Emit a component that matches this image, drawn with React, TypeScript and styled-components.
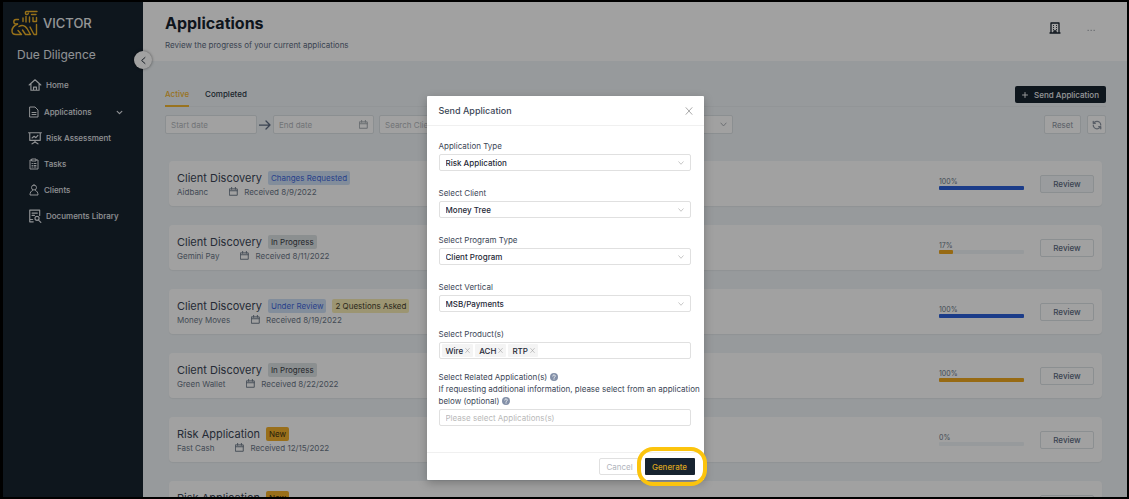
import React from 'react';
import styled, { createGlobalStyle } from 'styled-components';

const GlobalStyle = createGlobalStyle`
  * { box-sizing: border-box; }
  html, body { margin: 0; padding: 0; background: #000; }
  body, button, input, select {
    font-family: Inter, "Liberation Sans", sans-serif;
  }
  button, input, select { margin: 0; }
  h1, h2, h3, p, ul { margin: 0; padding: 0; }
  ul { list-style: none; }
  svg { display: block; flex: none; }
`;

const Shell = styled.div`
  position: relative;
  display: flex;
  height: 100vh;
  overflow: hidden;
  border: 2px solid #000;
  border-left-width: 3px;
`;

const Sidebar = styled.nav`
  width: 140px;
  flex: none;
  background: #17232f;
  color: #e4e7eb;
`;

const Brand = styled.a`
  display: flex;
  align-items: center;
  gap: 4px;
  padding: 6px 0 0 8px;
  color: #eceef0;
  font-size: 13px;
  line-height: 30px;
  font-weight: 500;
  text-decoration: none;
`;

const ProductName = styled.p`
  padding: 7px 14px 0;
  font-size: 12px;
  line-height: 20px;
`;

const NavList = styled.ul`
  padding: 7px 20px 0 25px;
`;

const NavItem = styled.li`
  &:first-child { margin-bottom: 1px; }
`;

const NavLink = styled.a`
  display: flex;
  align-items: center;
  gap: 4px;
  height: 26px;
  color: inherit;
  font-size: 8px;
  font-weight: 500;
  text-decoration: none;
`;

const NavCaret = styled.span`
  margin-left: auto;
`;

const Main = styled.main`
  position: relative;
  flex: 1;
  min-width: 0;
  background: #eff4f7;
`;

const CollapseButton = styled.button`
  position: absolute;
  left: -9px;
  top: 49px;
  width: 18px;
  height: 18px;
  padding: 0;
  display: flex;
  align-items: center;
  justify-content: center;
  border: 0;
  border-radius: 50%;
  background: #fff;
  color: #17232f;
  box-shadow: 0 0 3px rgba(0, 0, 0, 0.5);
`;

const PageHeader = styled.header`
  display: flex;
  justify-content: space-between;
  height: 59px;
  padding: 9px 32px 0 22px;
  background: #fff;
`;

const PageTitle = styled.h1`
  color: #17232f;
  font-size: 16px;
  line-height: 24px;
  font-weight: 700;
`;

const PageSubtitle = styled.p`
  padding-top: 4px;
  color: #5d6b82;
  font-size: 8px;
  line-height: 12px;
`;

const HeaderActions = styled.div`
  display: flex;
  align-items: center;
  gap: 26px;
  height: 34px;
`;

const IconButton = styled.button`
  display: flex;
  padding: 0;
  border: 0;
  background: none;
  color: #17232f;
`;

const Content = styled.div`
  padding: 25px 21px 0 22px;
`;

const TabBar = styled.div`
  display: flex;
  align-items: flex-start;
  gap: 16px;
  height: 21px;
  border-bottom: 1px solid #e8edf0;
`;

const Tab = styled.button<{ $active?: boolean }>`
  height: 21px;
  padding: 0 0 3px;
  border: 0;
  border-bottom: 2px solid ${(p) => (p.$active ? '#f2b632' : 'transparent')};
  background: none;
  color: ${(p) => (p.$active ? '#f2b632' : '#2b3846')};
  font-size: 8px;
  font-weight: 500;
`;

const SendButton = styled.button`
  display: flex;
  align-items: center;
  gap: 6px;
  height: 17px;
  margin-left: auto;
  padding: 0 7px;
  border: 0;
  border-radius: 2px;
  background: #17232f;
  color: #eceef0;
  font-size: 8px;
  font-weight: 500;
`;

const FilterBar = styled.div`
  display: flex;
  align-items: center;
  padding-top: 8px;
  color: #5d6b82;
`;

const FilterBox = styled.label<{ $width: number; $gap?: number }>`
  display: flex;
  align-items: center;
  width: ${(p) => p.$width}px;
  height: 19px;
  margin-right: ${(p) => p.$gap ?? 0}px;
  padding: 0 5px;
  border: 1px solid #dde2e6;
  border-radius: 2px;
  background: #fff;
  color: #a0a6ad;
`;

const FilterInput = styled.input`
  flex: 1;
  min-width: 0;
  padding: 0;
  border: 0;
  background: none;
  font-size: 8px;
  &::placeholder { color: #b4b8bd; opacity: 1; }
`;

const FilterSelect = styled.select`
  flex: 1;
  min-width: 0;
  padding: 0;
  border: 0;
  appearance: none;
  background: none;
  color: #b4b8bd;
  font-size: 8px;
`;

const RangeArrow = styled.span`
  display: flex;
  justify-content: center;
  width: 16px;
`;

const FilterActions = styled.div`
  display: flex;
  gap: 6px;
  margin-left: auto;
`;

const SmallButton = styled.button<{ $width: number }>`
  display: flex;
  align-items: center;
  justify-content: center;
  width: ${(p) => p.$width}px;
  height: 19px;
  padding: 0;
  border: 1px solid #dde2e6;
  border-radius: 2px;
  background: #fff;
  color: #8d96a3;
  font-size: 8px;
`;

const CardList = styled.ul`
  display: flex;
  flex-direction: column;
  gap: 19px;
  padding: 27px 4px 0;
`;

const Card = styled.li`
  display: flex;
  align-items: center;
  height: 45px;
  padding: 0 8px;
  border-radius: 4px;
  background: #fff;
  box-shadow: 0 1px 1px rgba(0, 0, 0, 0.05);
`;

const CardInfo = styled.div`
  flex: 1;
`;

const CardHeading = styled.div`
  display: flex;
  align-items: center;
  gap: 6px;
  height: 16px;
`;

const CardTitle = styled.h3`
  color: #3b4656;
  font-size: 11px;
  font-weight: 400;
`;

const tones = {
  blue: ['#cfe0f6', '#3f68dc'],
  gray: ['#dde2e4', '#3a4148'],
  yellow: ['#f7ecb5', '#46412c'],
  gold: ['#f3b02b', '#3b3010'],
};
type Tone = keyof typeof tones;

const Badge = styled.span<{ $tone: Tone }>`
  height: 14px;
  padding: 0 3px;
  border-radius: 2px;
  background: ${(p) => tones[p.$tone][0]};
  color: ${(p) => tones[p.$tone][1]};
  font-size: 8px;
  line-height: 14px;
`;

const CardMeta = styled.div`
  display: flex;
  align-items: center;
  gap: 6px;
  color: #6b7788;
  font-size: 8px;
  line-height: 12px;
`;

const ClientName = styled.span`
  margin-right: 15px;
`;

const Progress = styled.div`
  width: 85px;
  margin-right: 16px;
  color: #6b7788;
  font-size: 7px;
  line-height: 9px;
`;

const Track = styled.div`
  height: 4px;
  border-radius: 1px;
  background: #eff4f7;
`;

const Fill = styled.div<{ $color: string }>`
  height: 4px;
  border-radius: 1px;
  background: ${(p) => p.$color};
`;

const ReviewButton = styled.button<{ $tinted?: boolean }>`
  width: 54px;
  height: 18px;
  padding: 0;
  border: 1px solid #dde2e6;
  border-radius: 2px;
  background: ${(p) => (p.$tinted ? '#f4f8fa' : '#fff')};
  color: #5d6b82;
  font-size: 8px;
  font-weight: 500;
`;

const Overlay = styled.div`
  position: absolute;
  inset: 0;
  display: flex;
  justify-content: center;
  align-items: flex-start;
  padding-top: 94px;
  background: rgba(0, 0, 0, 0.37);
`;

const Modal = styled.section`
  width: 277px;
  border-radius: 1px;
  background: #fff;
  box-shadow: 0 3px 10px rgba(0, 0, 0, 0.25);
`;

const ModalHeader = styled.header`
  display: flex;
  align-items: center;
  justify-content: space-between;
  height: 30px;
  padding: 0 11px 0 12px;
  border-bottom: 1px solid #f0f0f0;
  color: #9a9a9a;
`;

const ModalTitle = styled.h2`
  color: #3b4656;
  font-size: 9px;
  line-height: 14px;
  font-weight: 500;
`;

const ModalBody = styled.form`
  padding: 14px 13px 26px 12px;
`;

const Field = styled.div<{ $last?: boolean; $tight?: boolean }>`
  display: flex;
  flex-direction: column;
  gap: 2px;
  margin-bottom: ${(p) => (p.$last ? 0 : p.$tight ? 12 : 16)}px;
`;

const FieldLabel = styled.label`
  color: #3b4656;
  font-size: 8px;
  line-height: 12px;
  white-space: nowrap;
`;

const Control = styled.div<{ $tags?: boolean }>`
  display: flex;
  align-items: center;
  gap: 2px;
  height: 17px;
  padding: 0 ${(p) => (p.$tags ? 2 : 6)}px;
  border: 1px solid #e0e0e0;
  border-radius: 2px;
  background: #fff;
  color: #b5b5b5;
`;

const Select = styled.select`
  flex: 1;
  min-width: 0;
  padding: 0;
  border: 0;
  appearance: none;
  background: none;
  color: #1f2937;
  font-size: 8px;
  font-weight: 500;
`;

const TextInput = styled.input`
  flex: 1;
  min-width: 0;
  padding: 0;
  border: 0;
  background: none;
  font-size: 8px;
  &::placeholder { color: #b9b9b9; opacity: 1; }
`;

const Tag = styled.span`
  display: flex;
  align-items: center;
  gap: 2px;
  height: 13px;
  padding: 0 3px 0 4px;
  border-radius: 1px;
  background: #f4f4f4;
  color: #1f2937;
  font-size: 8px;
  font-weight: 500;
`;

const CloseButton = styled(IconButton)`
  color: #999;
`;

const Help = styled.span`
  display: inline-block;
  margin-left: 3px;
  vertical-align: -1px;
`;

const ModalFooter = styled.footer`
  display: flex;
  justify-content: flex-end;
  gap: 4px;
  padding: 5px 9px;
  border-top: 1px solid #f0f0f0;
`;

const CancelButton = styled.button`
  width: 42px;
  height: 17px;
  padding: 0;
  border: 1px solid #e0e0e0;
  border-radius: 2px;
  background: #fff;
  color: #b0b4bc;
  font-size: 8px;
`;

const GenerateButton = styled.button`
  position: relative;
  width: 50px;
  height: 17px;
  padding: 0;
  border: 0;
  border-radius: 1px;
  background: #17232f;
  color: #dba51f;
  font-size: 8px;
  font-weight: 500;
  &::after {
    content: '';
    position: absolute;
    inset: -11px -12px -11px -8px;
    border: 4px solid #fcc40d;
    border-radius: 16px;
  }
`;

type IconProps = { w: number; h?: number; box?: string; sw?: number; children: React.ReactNode };
const Icon = ({ w, h = w, box = '0 0 24 24', sw = 2, children }: IconProps) => (
  <svg width={w} height={h} viewBox={box} fill="none" stroke="currentColor" strokeWidth={sw} strokeLinecap="round" strokeLinejoin="round" aria-hidden="true">
    {children}
  </svg>
);

const LionLogo = () => (
  <svg width="28" height="28" viewBox="0 0 28 28" fill="none" stroke="#f0b429" strokeWidth="1.4" strokeLinecap="round" strokeLinejoin="round" aria-hidden="true">
    <path d="M26 2.500H15.500a1.500 1.500 0 1 0 1.800 1.800M20.500 5.500H25" />
    <path d="M12 9v3.500M15 7.500V13M18.500 8v5M22 8.500v4h3.500V8.500" />
    <path d="M7.500 10.500H5a2.200 2.200 0 0 0 0 4.400h1.500" />
    <path d="M6.500 15c-3.500 1.500-5.500 4-5.500 7 0 2.200 1.200 3.500 4 3.500h5.500l-3.500-4" />
    <path d="M8 17.500c3-2 6-1 8 2l3.500 6h-5l-3-4.500M25.500 15.500v10h-2.500l-4-7.500" />
  </svg>
);

const Chevron = ({ w = 6 }: { w?: number }) => (
  <Icon w={w} sw={3}><path d="M3 7l9 10 9-10" /></Icon>
);
const Close = ({ w }: { w: number }) => (
  <Icon w={w} sw={2.5}><path d="M3 2l18 20M21 2L3 22" /></Icon>
);
const Calendar = ({ w = 9 }: { w?: number }) => (
  <Icon w={w} sw={2.5}><path d="M2 5h20v17H2zM2 10h20M7 1v5M17 1v5" /></Icon>
);
const HelpMark = () => (
  <Help>
    <svg width="8" height="8" viewBox="0 0 16 16" aria-hidden="true">
      <circle cx="8" cy="8" r="8" fill="#8390a8" />
      <path d="M5.500 6.200a2.500 2.500 0 1 1 3.600 2.300c-.8.4-1.100.8-1.100 1.500M8 12v.4" fill="none" stroke="#fff" strokeWidth="1.600" strokeLinecap="round" />
    </svg>
  </Help>
);

const navItems = [
  { label: 'Home', w: 14, icon: <path d="M2 12L12 3l10 9M5 10v11h14V10M9.500 21v-5.500h5V21" /> },
  { label: 'Applications', w: 12, caret: true, icon: <path d="M4 2h10l6 6v14H4zM8 13h8M8 17h8" /> },
  { label: 'Risk Assessment', w: 14, icon: <path d="M1 3h22M3 3v13h18V3M7 12l3.500-3 3 2.500L17 7.500M12 16v3M7 22l5-3 5 3" /> },
  { label: 'Tasks', w: 12, icon: <path d="M8 4H4v18h16V4h-4M8 2h8v4H8zM8 11h1M12 11h4M8 15h1M12 15h4M8 18h1M12 18h4" /> },
  { label: 'Clients', w: 12, icon: <path d="M12 2a5 5 0 1 1 0 10 5 5 0 0 1 0-10zM9 13c-3 1-5 4-5 9h16c0-5-2-8-5-9" /> },
  { label: 'Documents Library', w: 14, icon: <path d="M9 22H3V2h17v9M7 7h9M7 11h4M15.500 12.500a3.500 3.500 0 1 1 0 7 3.500 3.500 0 0 1 0-7zM18 19l4 4M3 18h5" /> },
];

type Application = { title: string; client: string; date: string; badges: [string, Tone][]; pct: number; color: string };
const blue = '#2b5fd9';
const gold = '#efa91f';
const applications: Application[] = [
  { title: 'Client Discovery', client: 'Aidbanc', date: '8/9/2022', badges: [['Changes Requested', 'blue']], pct: 100, color: blue },
  { title: 'Client Discovery', client: 'Gemini Pay', date: '8/11/2022', badges: [['In Progress', 'gray']], pct: 17, color: gold },
  { title: 'Client Discovery', client: 'Money Moves', date: '8/19/2022', badges: [['Under Review', 'blue'], ['2 Questions Asked', 'yellow']], pct: 100, color: blue },
  { title: 'Client Discovery', client: 'Green Wallet', date: '8/22/2022', badges: [['In Progress', 'gray']], pct: 100, color: gold },
  { title: 'Risk Application', client: 'Fast Cash', date: '12/15/2022', badges: [['New', 'gold']], pct: 0, color: gold },
  { title: 'Risk Application', client: 'Fast Cash', date: '12/15/2022', badges: [['New', 'gold']], pct: 0, color: gold },
];

const selects = [
  ['type', 'Application Type', 'Risk Application'],
  ['client', 'Select Client', 'Money Tree'],
  ['program', 'Select Program Type', 'Client Program'],
  ['vertical', 'Select Vertical', 'MSB/Payments'],
];

export default function App() {
  return (
    <Shell>
      <GlobalStyle />
      <Sidebar>
        <Brand href="#"><LionLogo />VICTOR</Brand>
        <ProductName>Due Diligence</ProductName>
        <NavList>
          {navItems.map((n) => (
            <NavItem key={n.label}>
              <NavLink href="#">
                <Icon w={n.w}>{n.icon}</Icon>
                {n.label}
                {n.caret && <NavCaret><Icon w={7} sw={4}><path d="M4 8l8 8 8-8" /></Icon></NavCaret>}
              </NavLink>
            </NavItem>
          ))}
        </NavList>
      </Sidebar>
      <Main>
        <PageHeader>
          <div>
            <PageTitle>Applications</PageTitle>
            <PageSubtitle>Review the progress of your current applications</PageSubtitle>
          </div>
          <HeaderActions>
            <IconButton aria-label="Organization">
              <Icon w={12} box="0 0 12 12" sw={1}>
                <path d="M2 11V1h8v10M1 11h10M5 11V9h2v2" strokeWidth="1.300" />
                <path d="M4.500 3.500h.1M7.500 3.500h.1M4.500 5.500h.1M7.500 5.500h.1M4.500 7.500h.1M7.500 7.500h.1" />
              </Icon>
            </IconButton>
            <IconButton aria-label="More">
              <Icon w={8} sw={3}><path d="M3 19h1M12 19h1M21 19h1" opacity="0.500" /></Icon>
            </IconButton>
          </HeaderActions>
        </PageHeader>
        <CollapseButton aria-label="Collapse menu">
          <Icon w={9} sw={2.5}><path d="M16 4l-9 8 9 8" /></Icon>
        </CollapseButton>
        <Content>
          <TabBar>
            <Tab $active>Active</Tab>
            <Tab>Completed</Tab>
            <SendButton>
              <Icon w={6} sw={4}><path d="M12 2v20M2 12h20" /></Icon>
              Send Application
            </SendButton>
          </TabBar>
          <FilterBar>
            <FilterBox $width={92}><FilterInput placeholder="Start date" aria-label="Start date" /></FilterBox>
            <RangeArrow><Icon w={12} sw={2.5}><path d="M1 12h21M14 4l8 8-8 8" /></Icon></RangeArrow>
            <FilterBox $width={101} $gap={5}><FilterInput placeholder="End date" aria-label="End date" /><Calendar /></FilterBox>
            <FilterBox $width={112} $gap={5}><FilterInput placeholder="Search Client" aria-label="Search Client" /></FilterBox>
            <FilterBox $width={237}>
              <FilterSelect aria-label="Status"><option>Status</option></FilterSelect>
              <Chevron w={7} />
            </FilterBox>
            <FilterActions>
              <SmallButton $width={37}>Reset</SmallButton>
              <SmallButton $width={19} aria-label="Refresh">
                <Icon w={10} sw={3}>
                  <path d="M21 12a9 9 0 0 0-9-9 9.750 9.750 0 0 0-6.740 2.740L3 8M3 3v5h5M3 12a9 9 0 0 0 9 9 9.750 9.750 0 0 0 6.740-2.740L21 16M16 16h5v5" />
                </Icon>
              </SmallButton>
            </FilterActions>
          </FilterBar>
          <CardList>
            {applications.map((a, i) => (
              <Card key={i}>
                <CardInfo>
                  <CardHeading>
                    <CardTitle>{a.title}</CardTitle>
                    {a.badges.map(([text, tone]) => <Badge key={text} $tone={tone}>{text}</Badge>)}
                  </CardHeading>
                  <CardMeta>
                    <ClientName>{a.client}</ClientName>
                    <Calendar />
                    <span>Received {a.date}</span>
                  </CardMeta>
                </CardInfo>
                <Progress>
                  {a.pct}%
                  <Track><Fill $color={a.color} style={{ width: `${a.pct}%` }} /></Track>
                </Progress>
                <ReviewButton $tinted={i === 0}>Review</ReviewButton>
              </Card>
            ))}
          </CardList>
        </Content>
      </Main>
      <Overlay>
        <Modal role="dialog" aria-labelledby="dialog-title">
          <ModalHeader>
            <ModalTitle id="dialog-title">Send Application</ModalTitle>
            <CloseButton aria-label="Close"><Close w={8} /></CloseButton>
          </ModalHeader>
          <ModalBody id="send-form">
            {selects.map(([id, label, value]) => (
              <Field key={id}>
                <FieldLabel htmlFor={id}>{label}</FieldLabel>
                <Control>
                  <Select id={id}><option>{value}</option></Select>
                  <Chevron />
                </Control>
              </Field>
            ))}
            <Field $tight>
              <FieldLabel htmlFor="products">Select Product(s)</FieldLabel>
              <Control $tags>
                {['Wire', 'ACH', 'RTP'].map((t) => (
                  <Tag key={t}>
                    {t}
                    <CloseButton type="button" aria-label={`Remove ${t}`}><Close w={5} /></CloseButton>
                  </Tag>
                ))}
                <TextInput id="products" />
              </Control>
            </Field>
            <Field $last>
              <FieldLabel htmlFor="related">
                Select Related Application(s)<HelpMark /><br />
                If requesting additional information, please select from an application<br />
                below (optional)<HelpMark />
              </FieldLabel>
              <Control>
                <TextInput id="related" placeholder="Please select Applications(s)" />
              </Control>
            </Field>
          </ModalBody>
          <ModalFooter>
            <CancelButton type="button">Cancel</CancelButton>
            <GenerateButton type="submit" form="send-form">Generate</GenerateButton>
          </ModalFooter>
        </Modal>
      </Overlay>
    </Shell>
  );
}
